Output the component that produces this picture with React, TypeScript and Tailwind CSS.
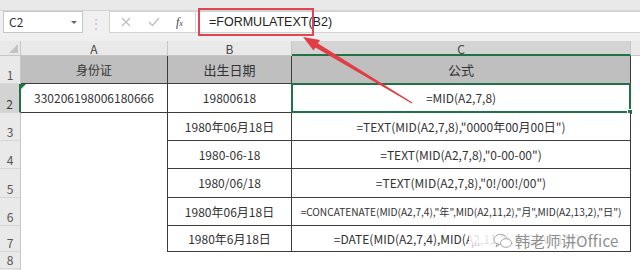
import React from "react";

const FONT = { fontFamily: '"Noto Sans CJK SC", "Noto Sans", sans-serif' };

type RowDef = {
  n: string;
  h: string;
  a?: string;
  b?: string;
  c?: React.ReactNode;
  header?: boolean;
  selected?: boolean;
  aBorder?: boolean;
  cSmall?: boolean;
  empty?: boolean;
};

const rows: RowDef[] = [
  { n: "1", h: "h-[28px]", a: "身份证", b: "出生日期", c: "公式", header: true, aBorder: true },
  { n: "2", h: "h-[29px]", a: "330206198006180666", b: "19800618", c: "=MID(A2,7,8)", selected: true, aBorder: true },
  { n: "3", h: "h-[28px]", b: "1980年06月18日", c: '=TEXT(MID(A2,7,8),"0000年00月00日")' },
  { n: "4", h: "h-[28px]", b: "1980-06-18", c: '=TEXT(MID(A2,7,8),"0-00-00")' },
  { n: "5", h: "h-[29px]", b: "1980/06/18", c: '=TEXT(MID(A2,7,8),"0!/00!/00")' },
  {
    n: "6",
    h: "h-[28px]",
    b: "1980年06月18日",
    c: '=CONCATENATE(MID(A2,7,4),"年",MID(A2,11,2),"月",MID(A2,13,2),"日")',
    cSmall: true,
  },
  { n: "7", h: "h-[26px]", b: "1980年6月18日", c: "=DATE(MID(A2,7,4),MID(A2,11,2),MID(A2,13,2))" },
  { n: "8", h: "h-[17px]", empty: true },
  { n: "", h: "h-[20px]", empty: true },
];

function Row({ r }: { r: RowDef }) {
  const bg = r.header ? "bg-[#bfbfbf]" : "bg-white";
  return (
    <div className={`flex shrink-0 ${r.h}`}>
      <div
        className={`w-[21px] shrink-0 flex ${r.empty ? "items-center" : "items-end"} justify-center text-[12px] leading-[16px] border-b border-[#d6d6d6] ${
          r.selected
            ? "bg-[#d3d3d3] text-[#3a3a3a] border-r-2 border-r-[#217346]"
            : "bg-[#e9e9e9] text-[#555] border-r border-r-[#c6c6c6]"
        }`}
      >
        {r.n}
      </div>
      {r.empty ? (
        <div className="flex-1 bg-white" />
      ) : (
        <>
          <div
            className={`relative w-[147px] shrink-0 flex items-center justify-center text-[12px] text-[#333] border-r border-[#3c3c3c] ${
              r.aBorder ? `border-b ${bg}` : "bg-white"
            }`}
          >
            {r.selected && (
              <div className="absolute left-0 top-0 w-0 h-0 border-t-[5px] border-r-[5px] border-t-[#1e7a3a] border-r-transparent" />
            )}
            {r.a}
          </div>
          <div
            className={`w-[124px] shrink-0 flex items-center justify-center ${
              r.header ? "text-[13px]" : "text-[12px]"
            } text-[#333] border-r border-b border-[#3c3c3c] ${bg}`}
          >
            {r.b}
          </div>
          <div
            className={`relative w-[339px] shrink-0 flex items-center justify-center whitespace-nowrap ${
              r.header ? "text-[13px]" : r.cSmall ? "text-[10.2px] tracking-[-0.05px]" : "text-[12px]"
            } text-[#333] border-r border-b border-[#3c3c3c] ${bg}`}
          >
            {r.c}
            {r.selected && (
              <div className="absolute -left-px -top-px -right-px -bottom-px border-2 border-[#217346]">
                <div className="absolute -right-[4px] -bottom-[4px] w-[6px] h-[6px] bg-[#217346] border border-white" />
              </div>
            )}
          </div>
          <div className="flex-1 bg-white" />
        </>
      )}
    </div>
  );
}

export default function App() {
  return (
    <div className="relative w-[640px] h-[270px] overflow-hidden bg-white" style={FONT}>
      {/* ribbon edge */}
      <div className="h-[11px] bg-[#e9e9e9] border-b border-[#d3d3d3]" />
      {/* formula bar */}
      <div className="flex h-[23px] bg-[#f0f0f0]">
        <div className="ml-[3px] w-[80px] h-[22px] bg-white border border-[#c6c6c6] flex items-center justify-between pl-[5px] pr-[5px]">
          <span className="text-[12px] text-[#333]">C2</span>
          <span className="w-0 h-0 border-l-[3px] border-r-[3px] border-t-[3px] border-l-transparent border-r-transparent border-t-[#666]" />
        </div>
        <div className="w-[26px] flex items-center justify-center text-[12px] text-[#bdbdbd]">⋮</div>
        <div className="w-[87px] h-[22px] bg-white border border-[#d3d3d3] flex items-center">
          <svg className="ml-[11px]" width="10" height="10" viewBox="0 0 10 10">
            <path d="M1 1 L9 9 M9 1 L1 9" stroke="#bcbcbc" strokeWidth="1.2" />
          </svg>
          <svg className="ml-[17px]" width="12" height="10" viewBox="0 0 12 10">
            <path d="M1 5 L4.5 8.5 L11 1" stroke="#bcbcbc" strokeWidth="1.3" fill="none" />
          </svg>
          <span
            className="ml-[16px] text-[12px] italic text-[#444]"
            style={{ fontFamily: '"Liberation Serif", serif' }}
          >
            f<span className="text-[8px]">x</span>
          </span>
        </div>
        <div className="flex-1 h-[22px] bg-white border-y border-[#d3d3d3] flex items-center pl-[13px]">
          <span className="text-[12.5px] text-[#222]" style={{ fontFamily: '"Liberation Sans", Arial, sans-serif' }}>
            =FORMULATEXT(B2)
          </span>
        </div>
      </div>
      <div className="h-[7px] bg-[#efefef]" />
      {/* column headers */}
      <div className="flex h-[15px] text-[12px] leading-[15px] text-[#444]">
        <div className="relative w-[21px] bg-[#e9e9e9] border-r border-b border-[#c6c6c6]">
          <svg className="absolute left-[9px] top-[3px]" width="9" height="9" viewBox="0 0 9 9">
            <polygon points="9,0 9,9 0,9" fill="#c4c4c4" />
          </svg>
        </div>
        <div className="w-[147px] bg-[#e9e9e9] border-r border-b border-[#c6c6c6] text-center">A</div>
        <div className="w-[124px] bg-[#e9e9e9] border-r border-b border-[#c6c6c6] text-center">B</div>
        <div className="w-[339px] bg-[#d4d4d4] border-r border-r-[#c6c6c6] border-b-2 border-b-[#217346] text-center text-[#444]">
          C
        </div>
        <div className="flex-1 bg-[#e9e9e9] border-b border-[#c6c6c6]" />
      </div>
      {rows.map((r, i) => (
        <Row key={i} r={r} />
      ))}

      {/* red annotation box */}
      <div className="absolute left-[198px] top-[8px] w-[116px] h-[28px] border-[2.5px] border-[#e04651]" />
      {/* red arrow */}
      <svg className="absolute left-0 top-0" width="640" height="270" viewBox="0 0 640 270">
        <polygon points="303,37 320,40 313.5,50.5" fill="#e23c45" />
        <polygon points="311,45 314,41 412.4,102.6 411.8,103.4" fill="#e23c45" />
      </svg>

      {/* watermark */}
      <div className="absolute left-[469px] top-[231px] h-[19px] flex items-center bg-white/85 pr-[6px] pl-[2px]">
        <span className="w-[22px] text-[11px] text-[#b5b5b5] leading-[18px]">,..</span>
        <svg width="20" height="16" viewBox="0 0 20 16">
          <ellipse cx="7.5" cy="6.5" rx="6.5" ry="5.2" fill="none" stroke="#a8a8a8" strokeWidth="1" />
          <ellipse cx="13" cy="10" rx="5.5" ry="4.3" fill="white" stroke="#a8a8a8" strokeWidth="1" />
          <path d="M4 11 L3 14 L6.5 11.5" fill="none" stroke="#a8a8a8" strokeWidth="1" />
        </svg>
        <span
          className="ml-[2px] text-[15px] leading-[18px] text-[#8e8e8e]"
          style={{ textShadow: "0 0 1px #fff, 0 0 1px #fff", letterSpacing: "0.3px" }}
        >
          韩老师讲Office
        </span>
      </div>
    </div>
  );
}
